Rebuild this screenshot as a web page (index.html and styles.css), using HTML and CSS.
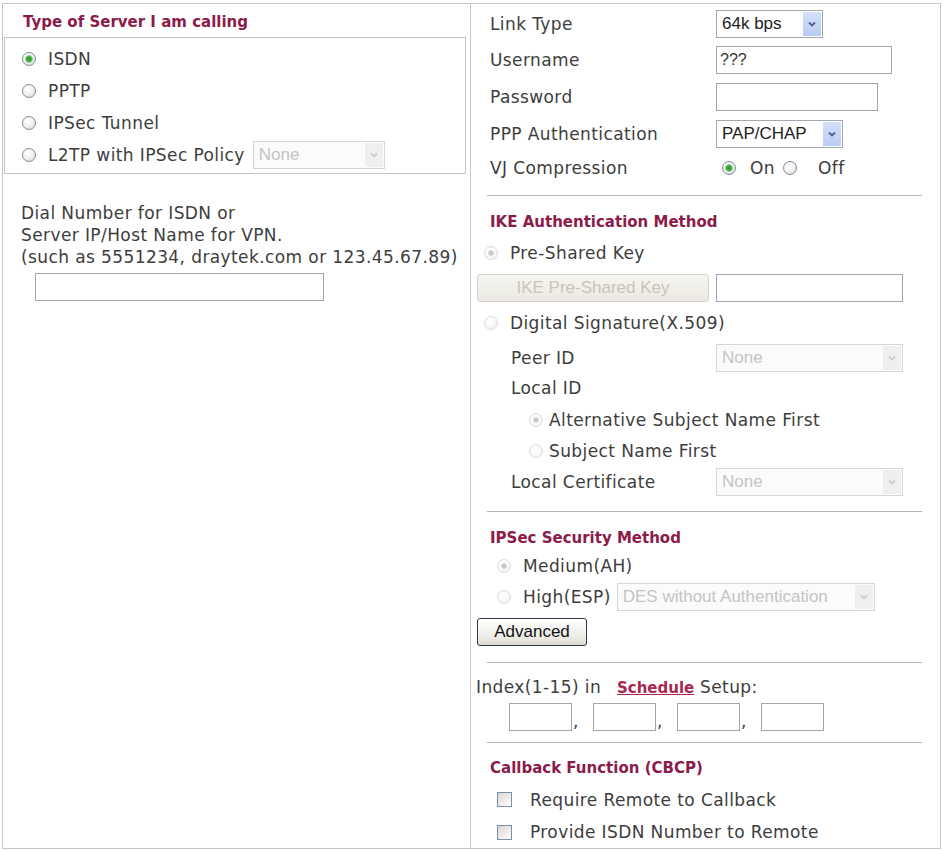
FILE: index.html
```html
<!DOCTYPE html>
<html>
<head>
<meta charset="utf-8">
<title>Dial-Out Settings</title>
<link rel="stylesheet" href="styles.css">
</head>
<body>
<div class="frame">
  <div class="left">
    <div class="title t-left">Type of Server I am calling</div>
    <div class="group">
      <div class="opt"><span class="radio on"></span><span>ISDN</span></div>
      <div class="opt"><span class="radio"></span><span>PPTP</span></div>
      <div class="opt"><span class="radio"></span><span>IPSec Tunnel</span></div>
      <div class="opt"><span class="radio"></span><span>L2TP with IPSec Policy</span>
        <span class="sel dis w-l2tp"><span class="sel-text">None</span><span class="sel-btn"><svg viewBox="0 0 10 10" width="10" height="10"><path d="M2 3.5 L5 6.5 L8 3.5" fill="none" stroke="currentColor" stroke-width="1.8"/></svg></span></span>
      </div>
    </div>
    <div class="dial">Dial Number for ISDN or<br>Server IP/Host Name for VPN.<br>(such as 5551234, draytek.com or 123.45.67.89)</div>
    <input class="txt w-dial" type="text">
  </div>

  <div class="right">
    <div class="frow h36"><span class="flabel">Link Type</span>
      <span class="sel w-link"><span class="sel-text">64k bps</span><span class="sel-btn"><svg viewBox="0 0 10 10" width="10" height="10"><path d="M2 3.5 L5 6.5 L8 3.5" fill="none" stroke="currentColor" stroke-width="1.8"/></svg></span></span>
    </div>
    <div class="frow h36"><span class="flabel">Username</span><input class="txt w-user" type="text" value="???"></div>
    <div class="frow h37"><span class="flabel">Password</span><input class="txt w-pass" type="password"></div>
    <div class="frow h37"><span class="flabel">PPP Authentication</span>
      <span class="sel w-ppp"><span class="sel-text">PAP/CHAP</span><span class="sel-btn"><svg viewBox="0 0 10 10" width="10" height="10"><path d="M2 3.5 L5 6.5 L8 3.5" fill="none" stroke="currentColor" stroke-width="1.8"/></svg></span></span>
    </div>
    <div class="frow h32"><span class="flabel">VJ Compression</span>
      <span class="radio on vj-r"></span><span>On</span><span class="radio vj-r vj-off"></span><span>Off</span>
    </div>

    <div class="hr hr-1"></div>

    <div class="title t-right t-ike">IKE Authentication Method</div>
    <div class="row h42 in-13"><span class="radio dis on r-12"></span><span>Pre-Shared Key</span></div>
    <div class="row h28 in-6">
      <span class="btn-dis">IKE Pre-Shared Key</span>
      <input class="txt w-key" type="text">
    </div>
    <div class="row h42 in-13"><span class="radio dis r-12"></span><span>Digital Signature(X.509)</span></div>
    <div class="row h28 in-40"><span class="slabel">Peer ID</span>
      <span class="sel dis w-wide"><span class="sel-text">None</span><span class="sel-btn"><svg viewBox="0 0 10 10" width="10" height="10"><path d="M2 3.5 L5 6.5 L8 3.5" fill="none" stroke="currentColor" stroke-width="1.8"/></svg></span></span>
    </div>
    <div class="row h32 in-40"><span>Local ID</span></div>
    <div class="row h32 in-58"><span class="radio dis on r-7"></span><span>Alternative Subject Name First</span></div>
    <div class="row h30 in-58"><span class="radio dis r-7"></span><span>Subject Name First</span></div>
    <div class="row h32 in-40"><span class="slabel">Local Certificate</span>
      <span class="sel dis w-wide"><span class="sel-text">None</span><span class="sel-btn"><svg viewBox="0 0 10 10" width="10" height="10"><path d="M2 3.5 L5 6.5 L8 3.5" fill="none" stroke="currentColor" stroke-width="1.8"/></svg></span></span>
    </div>

    <div class="hr hr-2"></div>

    <div class="title t-right t-ipsec">IPSec Security Method</div>
    <div class="row h35 in-26"><span class="radio dis on r-13"></span><span>Medium(AH)</span></div>
    <div class="row h28 in-26"><span class="radio dis r-13"></span><span>High(ESP)</span>
      <span class="sel dis w-esp"><span class="sel-text">DES without Authentication</span><span class="sel-btn"><svg viewBox="0 0 10 10" width="10" height="10"><path d="M2 3.5 L5 6.5 L8 3.5" fill="none" stroke="currentColor" stroke-width="1.8"/></svg></span></span>
    </div>
    <div class="row-btn"><span class="btn">Advanced</span></div>

    <div class="hr hr-3"></div>

    <div class="index">Index(1-15) in <a class="link" href="#">Schedule</a> Setup:</div>
    <div class="sched">
      <input class="txt w-idx" type="text"><span class="comma">,</span>
      <input class="txt w-idx" type="text"><span class="comma">,</span>
      <input class="txt w-idx" type="text"><span class="comma">,</span>
      <input class="txt w-idx" type="text">
    </div>

    <div class="hr hr-4"></div>

    <div class="title t-right t-cb">Callback Function (CBCP)</div>
    <div class="row h31 in-26 cb-first"><span class="check"></span><span>Require Remote to Callback</span></div>
    <div class="row h34 in-26"><span class="check"></span><span>Provide ISDN Number to Remote</span></div>
  </div>
</div>
</body>
</html>
```

FILE: styles.css
```css
* { box-sizing: border-box; }

body {
  margin: 0;
  background: #fff;
  font-family: "DejaVu Sans", Verdana, sans-serif;
  font-size: 17px;
  letter-spacing: 0.4px;
  color: #3d3d3d;
}

.frame {
  margin: 3px 0 0 2px;
  width: 939px;
  height: 846px;
  border: 1px solid #c6c6c6;
  display: grid;
  grid-template-columns: 467px 1fr;
}

.left { padding-top: 8px; }
.right { border-left: 1px solid #c6c6c6; padding-top: 2px; }

.title {
  font-family: "DejaVu Sans", Verdana, sans-serif;
  font-weight: bold;
  font-size: 15px;
  letter-spacing: 0;
  line-height: 20px;
  color: #8b1b4a;
}
.t-left { padding-left: 20px; }
.t-right { padding-left: 19px; }
.t-ike { margin-top: 16px; }
.t-ipsec { margin-top: 16px; }
.t-cb { margin-top: 15px; }

/* left group */
.group {
  margin: 5px 4px 0 1px;
  border: 1px solid #c3c3c3;
  padding: 5px 0 2px 17px;
}
.opt { display: flex; align-items: center; height: 32px; }
.opt .radio { margin-right: 12px; }
.dial { margin-top: 28px; padding-left: 18px; line-height: 22px; }

/* radios */
.radio {
  flex: none;
  width: 14px;
  height: 14px;
  border-radius: 50%;
  border: 1px solid #7f8c99;
  background: radial-gradient(circle at 40% 35%, #ffffff 0, #f3f3f3 45%, #d2d2d2 100%);
}
.radio.on {
  background:
    radial-gradient(circle, #2a992a 0, #3aac3a 2.4px, #a3d6a3 3.6px, rgba(255,255,255,0) 4.4px),
    radial-gradient(circle at 40% 35%, #ffffff 0, #f3f3f3 45%, #d2d2d2 100%);
}
.radio.dis {
  border-color: #dcdcdc;
  background: radial-gradient(circle at 40% 35%, #ffffff 0, #f7f7f7 60%, #ececec 100%);
}
.radio.dis.on {
  background:
    radial-gradient(circle, #c4c4c4 0, #cdcdcd 2.2px, rgba(255,255,255,0) 3.4px),
    radial-gradient(circle at 40% 35%, #ffffff 0, #f7f7f7 60%, #ececec 100%);
}
.r-12 { margin-right: 12px; }
.r-7 { margin-right: 6px; }
.r-13 { margin-right: 12px; }
.vj-r { margin: 0 14px 0 6px; }
.vj-off { margin-left: 8px; margin-right: 21px; }

/* checkbox */
.check {
  flex: none;
  width: 15px;
  height: 15px;
  border: 1px solid #7890aa;
  background: linear-gradient(135deg, #d9d9d3 0, #efefea 60%, #ffffff 100%);
  margin-right: 18px;
}

/* form rows */
.frow { display: flex; align-items: center; padding-left: 19px; }
.flabel { width: 226px; flex: none; }
.row { display: flex; align-items: center; }
.slabel { width: 205px; flex: none; }
.h28 { height: 28px; }
.h30 { height: 30px; }
.h31 { height: 31px; }
.h32 { height: 32px; }
.h34 { height: 34px; }
.h35 { height: 35px; }
.h36 { height: 36px; }
.h37 { height: 37px; }
.h42 { height: 42px; }
.in-6 { padding-left: 6px; }
.in-13 { padding-left: 13px; }
.in-26 { padding-left: 26px; }
.in-40 { padding-left: 40px; }
.in-58 { padding-left: 58px; }
.cb-first { margin-top: 6px; }

/* hr */
.hr { height: 1px; background: #b2b2b2; margin-left: 16px; margin-right: 18px; }
.hr-1 { margin-top: 11px; }
.hr-2 { margin-top: 13px; }
.hr-3 { margin-top: 16px; }
.hr-4 { margin-top: 11px; }

/* selects */
.sel {
  flex: none;
  display: inline-flex;
  height: 28px;
  border: 1px solid #a3a9b1;
  background: #fff;
  font-family: "Liberation Sans", Arial, sans-serif;
  font-size: 17px;
  letter-spacing: 0;
  color: #222;
}
.sel-text { flex: 1; padding-left: 5px; line-height: 26px; white-space: nowrap; overflow: hidden; }
.sel-btn {
  flex: none;
  width: 18px;
  margin: 1px;
  display: flex;
  align-items: center;
  justify-content: center;
  background: linear-gradient(#d4e0fb, #b9ccf5);
  color: #4a5f8c;
}
.sel.dis { border-color: #d6d6d6; background: #fbfbfb; color: #c4c4c4; }
.sel.dis .sel-btn { background: #efefef; color: #cdcdcd; }
.w-l2tp { width: 132px; margin-left: 8px; }
.w-link { width: 107px; }
.w-ppp { width: 127px; }
.w-wide { width: 187px; }
.w-esp { width: 258px; margin-left: 6px; }

/* text inputs */
.txt {
  flex: none;
  height: 28px;
  border: 1px solid #9ea7b0;
  background: #fff;
  font-family: "Liberation Sans", Arial, sans-serif;
  font-size: 16px;
  letter-spacing: 0;
  color: #333;
  padding: 0 3px;
  margin: 0;
  outline: none;
}
.w-dial { width: 289px; margin: 5px 0 0 32px; display: block; }
.w-user { width: 176px; }
.w-pass { width: 162px; }
.w-key { width: 187px; margin-left: 7px; }
.w-idx { width: 63px; }

/* buttons */
.btn-dis {
  flex: none;
  width: 232px;
  height: 28px;
  border: 1px solid #d6d4ca;
  border-radius: 3px;
  background: linear-gradient(#f6f5f1, #ebe9e2);
  font-family: "Liberation Sans", Arial, sans-serif;
  font-size: 17px;
  letter-spacing: 0;
  color: #c8c5ba;
  text-align: center;
  line-height: 26px;
}
.row-btn { margin-top: 7px; padding-left: 6px; }
.btn {
  display: block;
  width: 110px;
  height: 28px;
  border: 1px solid #2d3b4c;
  border-radius: 3px;
  background: linear-gradient(#ffffff, #ecebe5 70%, #dcdad2);
  font-family: "Liberation Sans", Arial, sans-serif;
  font-size: 17px;
  letter-spacing: 0;
  color: #111;
  text-align: center;
  line-height: 26px;
}

/* schedule */
.index { margin-top: 14px; padding-left: 5px; line-height: 20px; }
.link {
  font-weight: bold;
  font-size: 15px;
  letter-spacing: 0;
  color: #a8284f;
  text-decoration: underline;
  margin-left: 10px;
}
.sched { display: flex; align-items: center; padding-left: 38px; margin-top: 5px; }
.comma { width: 21px; flex: none; align-self: flex-end; line-height: 20px; padding-left: 1px; }
```
